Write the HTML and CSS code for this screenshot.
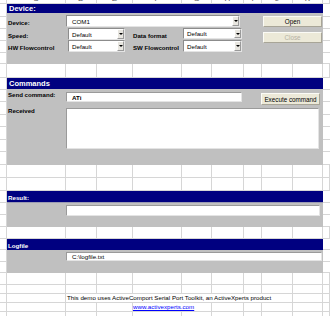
FILE: index.html
```html
<!DOCTYPE html>
<html>
<head>
<meta charset="utf-8">
<link rel="stylesheet" href="styles.css">
</head>
<body>
<div class="sheet">
  <div class="row hdr">
    <i></i><i><span>C</span></i><i><span>D</span></i><i><span>E</span></i><i><span>F</span></i><i><span>G</span></i><i><span>H</span></i><i><span>I</span></i><i><span>J</span></i><i><span>K</span></i><i></i>
  </div>

  <section class="sec">
    <div class="gut gl"><i class="g13"></i><i class="g12"></i><i class="g12"></i><i class="g12"></i><i class="g11"></i></div>
    <div class="panel">
      <div class="band b-dev">Device:</div>
      <div class="body grid9 dev">
        <div class="lbl l-r1">Device:</div>
        <div class="combo c-com"><span class="val">COM1</span><span class="arr"></span></div>
        <div class="btn b-open">Open</div>
        <div class="lbl l-r2">Speed:</div>
        <div class="combo c-speed"><span class="val">Default</span><span class="arr"></span></div>
        <div class="lbl l-r2b">Data format</div>
        <div class="combo c-data"><span class="val">Default</span><span class="arr"></span></div>
        <div class="btn dis b-close">Close</div>
        <div class="lbl l-r3">HW Flowcontrol</div>
        <div class="combo c-hw"><span class="val">Default</span><span class="arr"></span></div>
        <div class="lbl l-r3b">SW Flowcontrol</div>
        <div class="combo c-sw"><span class="val">Default</span><span class="arr"></span></div>
      </div>
    </div>
    <div class="gut gr"><i class="g13"></i><i class="g12"></i><i class="g12"></i><i class="g12"></i><i class="g11"></i></div>
  </section>

  <div class="row h14"><i></i><i></i><i></i><i></i><i></i><i></i><i></i><i></i><i></i><i></i><i></i></div>

  <section class="sec">
    <div class="gut gl"><i class="g12"></i><i class="g12"></i><i class="g13"></i><i class="g12"></i><i class="g13"></i><i class="g12"></i><i class="g13"></i></div>
    <div class="panel">
      <div class="band b-cmd">Commands</div>
      <div class="body grid9 cmd">
        <div class="lbl l-send">Send command:</div>
        <div class="field f-send">ATi</div>
        <div class="btn b-exec">Execute command</div>
        <div class="lbl l-recv">Received</div>
        <div class="field f-recv"></div>
      </div>
    </div>
    <div class="gut gr"><i class="g12"></i><i class="g12"></i><i class="g13"></i><i class="g12"></i><i class="g13"></i><i class="g12"></i><i class="g13"></i></div>
  </section>

  <div class="row h13"><i></i><i></i><i></i><i></i><i></i><i></i><i></i><i></i><i></i><i></i><i></i></div>
  <div class="row h13"><i></i><i></i><i></i><i></i><i></i><i></i><i></i><i></i><i></i><i></i><i></i></div>

  <section class="sec">
    <div class="gut gl"><i class="g12"></i><i class="g12"></i><i class="g12"></i></div>
    <div class="panel">
      <div class="band b-res">Result:</div>
      <div class="body grid9 res">
        <div class="field f-res"></div>
      </div>
    </div>
    <div class="gut gr"><i class="g12"></i><i class="g12"></i><i class="g12"></i></div>
  </section>

  <div class="row h12"><i></i><i></i><i></i><i></i><i></i><i></i><i></i><i></i><i></i><i></i><i></i></div>

  <section class="sec">
    <div class="gut gl"><i class="g11"></i><i class="g12"></i><i class="g11"></i></div>
    <div class="panel">
      <div class="band b-log">Logfile</div>
      <div class="body grid9 log">
        <div class="field f-log">C:\logfile.txt</div>
      </div>
    </div>
    <div class="gut gr"><i class="g11"></i><i class="g12"></i><i class="g11"></i></div>
  </section>

  <div class="row h12"><i></i><i></i><i></i><i></i><i></i><i></i><i></i><i></i><i></i><i></i><i></i></div>
  <div class="row h9"><i></i><i></i><i></i><i></i><i></i><i></i><i></i><i></i><i></i><i></i><i></i></div>
  <div class="row h9"><i></i><i></i><i class="note">This demo uses ActiveComport Serial Port Toolkit, an ActiveXperts product</i><i></i><i></i></div>
  <div class="row h8"><i></i><i></i><i></i><i></i><i class="linkcell"><a href="#">www.activexperts.com</a></i><i></i><i></i><i></i><i></i><i></i></div>
  <div class="row h12"><i></i><i></i><i></i><i></i><i></i><i></i><i></i><i></i><i></i><i></i><i></i></div>
</div>
</body>
</html>
```

FILE: styles.css
```css
* { box-sizing: border-box; margin: 0; padding: 0; }
html, body { height: 316px; }
body {
  margin: 0;
  width: 330px;
  overflow: hidden;
  background: #fff;
  font-family: "Liberation Sans", Arial, sans-serif;
  font-size: 6.2px;
  color: #000;
}
.sheet { display: flex; flex-direction: column; width: 330px; }

/* ordinary spreadsheet rows */
.row {
  display: grid;
  grid-template-columns: 7px 59px 31px 36px 49px 30px 32px 18px 31px 30px 7px;
  flex: none;
}
.row > i {
  display: block;
  font-style: normal;
  border-right: 1px solid #d6d6d6;
  border-bottom: 1px solid #d6d6d6;
  overflow: visible;
  white-space: nowrap;
}
.h14 { height: 14px; }
.h13 { height: 13px; }
.h12 { height: 12px; }
.h9 { height: 9px; }
.h8 { height: 8px; }

.hdr { height: 4px; overflow: hidden; }
.hdr > i { text-align: center; overflow: hidden; color: #555; }
.hdr span { display: block; font-size: 8px; line-height: 8px; margin-top: -5px; }

.note { grid-column: 3 / 10; padding-left: 1px; line-height: 8px; }
.linkcell { grid-column: 5 / 7; line-height: 8px; }
.linkcell a { color: #0000ff; text-decoration: underline; }

/* sections with gray panels */
.sec {
  display: grid;
  grid-template-columns: 7px 316px 7px;
  flex: none;
}
.gut { display: flex; flex-direction: column; }
.gut > i { display: block; border-bottom: 1px solid #d6d6d6; }
.gl > i { border-right: 1px solid #d6d6d6; }
.g13 { height: 13px; }
.g12 { height: 12px; }
.g11 { height: 11px; }

.panel { display: flex; flex-direction: column; }
.band {
  background: #000080;
  color: #fff;
  font-weight: bold;
  font-size: 7.5px;
  padding-left: 2px;
  display: flex;
  align-items: center;
}
.b-dev { height: 9px; }
.b-cmd { height: 11px; }
.b-res { height: 12px; font-size: 6.2px; align-items: flex-end; padding-left: 1px; padding-bottom: 1px; border-bottom: 1px solid #9c9cb4; }
.b-log { height: 11px; font-size: 6.2px; padding-left: 1px; padding-top: 1px; }

.body { background: #c0c0c0; }
.grid9 {
  display: grid;
  grid-template-columns: 59px 31px 36px 49px 30px 32px 18px 31px 30px;
}
.dev { grid-template-rows: 14px 13px 12px 12px; height: 51px; }
.cmd { grid-template-rows: 17px 59px; height: 76px; }
.res { height: 24px; }
.log { height: 23px; }

.lbl {
  font-weight: bold;
  font-size: 6.1px;
  line-height: 7px;
  padding-left: 1px;
  white-space: nowrap;
  align-self: end;
  margin-bottom: 1px;
}
.l-r1 { grid-column: 1; grid-row: 1; }
.l-r2 { grid-column: 1; grid-row: 2; }
.l-r2b { grid-column: 4; grid-row: 2; padding-left: 0; }
.l-r3 { grid-column: 1; grid-row: 3; }
.l-r3b { grid-column: 4; grid-row: 3; padding-left: 0; }

.combo {
  background: #fff;
  border: 1px solid;
  border-color: #8c8c8c #e4e4e4 #e4e4e4 #8c8c8c;
  display: flex;
  align-items: stretch;
  padding-left: 3px;
  align-self: start;
}
.combo .val { flex: 1; display: flex; align-items: center; line-height: 7px; }
.combo .arr {
  width: 7px;
  background: #e8e6e0;
  border: 1px solid;
  border-color: #fff #9a9a9a #9a9a9a #fff;
  display: flex;
  align-items: center;
  justify-content: center;
}
.combo .arr::after {
  content: "";
  border-left: 2px solid transparent;
  border-right: 2px solid transparent;
  border-top: 2px solid #000;
}
.c-com { grid-column: 2 / 7; grid-row: 1; margin: 2px 4px 0 0; height: 12px; padding-left: 5px; }
.c-speed { grid-column: 2 / 4; grid-row: 2; margin: 1px 8px 0 2px; height: 12px; }
.c-hw { grid-column: 2 / 4; grid-row: 3; margin: 0 8px 0 2px; height: 12px; }
.c-data { grid-column: 5 / 7; grid-row: 2; margin: 1px 2px 0 1px; height: 11px; }
.c-sw { grid-column: 5 / 7; grid-row: 3; margin: 0 2px 0 1px; height: 12px; }

.btn {
  background: #ece9d8;
  border: 1px solid;
  border-color: #fbfbf6 #a8a597 #a8a597 #fbfbf6;
  display: flex;
  align-items: center;
  justify-content: center;
  font-size: 6.3px;
  white-space: nowrap;
  align-self: start;
}
.btn.dis { color: #b4b1a3; }
.b-open { grid-column: 8 / 10; grid-row: 1; margin: 3px 1px 0 1px; height: 11px; }
.b-close { grid-column: 8 / 10; grid-row: 2 / 4; margin: 5px 1px 0 1px; height: 11px; }
.b-exec { grid-column: 7 / 10; grid-row: 1; justify-self: end; width: 59px; margin: 4px 3px 0 0; height: 12px; }

.field {
  background: #fff;
  border: 1px solid;
  border-color: #9a9a9a #e4e4e4 #e4e4e4 #9a9a9a;
  align-self: start;
  display: flex;
  align-items: center;
  padding-left: 5px;
  white-space: nowrap;
}
.l-send { grid-column: 1; grid-row: 1; align-self: start; margin: 2px 0 0 0; }
.f-send { grid-column: 2 / 7; grid-row: 1; margin: 3px 2px 0 0; height: 10px; font-weight: bold; }
.l-recv { grid-column: 1; grid-row: 2; align-self: start; margin: 1px 0 0 0; }
.f-recv { grid-column: 2 / 10; grid-row: 2; margin: 2px 4px 0 0; height: 41px; }
.f-res { grid-column: 2 / 10; margin: 2px 3px 0 0; height: 11px; }
.f-log { grid-column: 2 / 10; margin: 2px 1px 0 0; height: 9px; }
```
